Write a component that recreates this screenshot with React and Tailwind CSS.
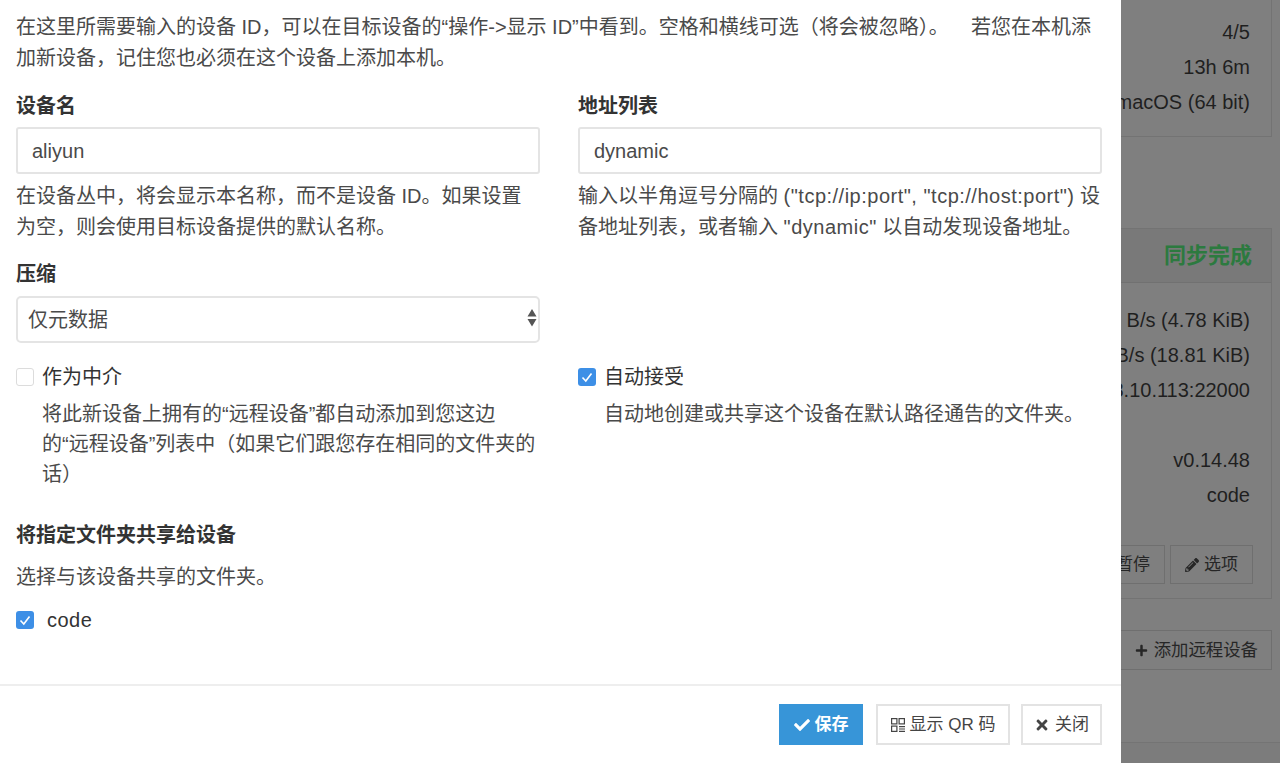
import React from "react";
import { FaCheck, FaTimes, FaPencilAlt, FaPlus } from "react-icons/fa";

const fontStack = "font-['Liberation_Sans','Noto_Sans_CJK_SC',sans-serif]";

const CheckBox = ({ checked }) =>
  checked ? (
    <span className="flex h-[18px] w-[18px] shrink-0 items-center justify-center rounded-[3px] bg-[#3d8fe6]">
      <svg viewBox="0 0 18 18" className="h-[18px] w-[18px]" fill="none" stroke="white" strokeWidth="1.6">
        <path d="M4.5 9.5 L7.8 13 L13.5 5.5" />
      </svg>
    </span>
  ) : (
    <span className="block h-[18px] w-[18px] shrink-0 rounded-[3px] border border-[#dcdcdc] bg-white" />
  );

const QrIcon = () => (
  <svg viewBox="0 0 14 14" className="h-[14px] w-[14px]" fill="none" stroke="#444" strokeWidth="1.2">
    <rect x="0.6" y="0.6" width="5.3" height="5.3" />
    <rect x="8.1" y="0.6" width="5.3" height="5.3" />
    <rect x="0.6" y="8.1" width="5.3" height="5.3" />
    <path d="M8 8.6 H14 M8 11 H14 M8 13.4 H14" />
  </svg>
);

const TextField = ({ label, value, help }) => (
  <div className="w-[524px]">
    <div className="h-[34px] text-[20px] font-bold leading-[34px] text-[#333]">{label}</div>
    <input
      readOnly
      value={value}
      className="mt-[4px] block h-[47px] w-full rounded-[3px] border-2 border-[#e4e4e4] px-[14px] pt-[2px] text-[20px] text-[#4a4a4a]"
    />
    <p className="mt-[7px] text-[20px] leading-[31px] text-[#4a4a4a]">{help}</p>
  </div>
);

const FooterButton = ({ className, children }) => (
  <button className={`flex h-[41px] items-center justify-center gap-[5px] border-2 text-[17px] ${className}`}>
    {children}
  </button>
);

const InfoRow = ({ children }) => (
  <div className="flex h-[35px] items-center justify-end whitespace-nowrap text-[20px] text-[#1f1f1f]">{children}</div>
);

const Modal = () => (
  <div className="flex h-[763px] w-[1121px] shrink-0 flex-col bg-white shadow-[1px_0_2px_#3f3f3f]">
    <div className="h-[684px] px-[16px] pt-[12px]">
      <p className="w-[1086px] text-[20px] leading-[31px] text-[#4a4a4a]">
        在这里所需要输入的设备 ID，可以在目标设备的“操作-&gt;显示 ID”中看到。空格和横线可选（将会被忽略）。&nbsp;&nbsp;&nbsp; 若您在本机添
        <br />
        加新设备，记住您也必须在这个设备上添加本机。
      </p>
      <div className="mt-[15px] flex gap-[38px]">
        <TextField
          label="设备名"
          value="aliyun"
          help="在设备丛中，将会显示本名称，而不是设备 ID。如果设置为空，则会使用目标设备提供的默认名称。"
        />
        <TextField
          label="地址列表"
          value="dynamic"
          help={
            <>
              输入以半角逗号分隔的 <span className="tracking-[0.5px]">("tcp://ip:port", "tcp://host:port")</span> 设备地址列表，或者输入{" "}
              <span className="tracking-[0.5px]">"dynamic"</span> 以自动发现设备地址。
            </>
          }
        />
      </div>
      <div className="mt-[14px] h-[34px] text-[20px] font-bold leading-[34px] text-[#333]">压缩</div>
      <div className="relative mt-[5px] w-[524px]">
        <select className="block h-[47px] w-full appearance-none rounded-[5px] border-2 border-[#e4e4e4] bg-white px-[10px] text-[20px] text-[#4a4a4a]">
          <option>仅元数据</option>
        </select>
        <svg viewBox="0 0 10 18" className="absolute right-[3px] top-[13px] h-[18px] w-[10px]" fill="#555">
          <path d="M5 0 L9.5 7.5 H0.5 Z M0.5 10 H9.5 L5 17.5 Z" />
        </svg>
      </div>
      <div className="mt-[19px] flex gap-[38px]">
        <div className="w-[524px]">
          <label className="flex h-[30px] items-center gap-[8px] text-[20px] text-[#333]">
            <CheckBox />
            作为中介
          </label>
          <p className="mt-[7px] pl-[26px] text-[20px] leading-[30px] text-[#4a4a4a]">
            将此新设备上拥有的“远程设备”都自动添加到您这边
            <br />
            的“远程设备”列表中（如果它们跟您存在相同的文件夹的话）
          </p>
        </div>
        <div className="w-[524px]">
          <label className="flex h-[30px] items-center gap-[8px] text-[20px] text-[#333]">
            <CheckBox checked />
            自动接受
          </label>
          <p className="mt-[7px] pl-[26px] text-[20px] leading-[30px] text-[#4a4a4a]">
            自动地创建或共享这个设备在默认路径通告的文件夹。
          </p>
        </div>
      </div>
      <div className="mt-[29px] h-[34px] text-[20px] font-bold leading-[34px] text-[#333]">将指定文件夹共享给设备</div>
      <p className="mt-[10px] h-[30px] text-[20px] leading-[30px] text-[#4a4a4a]">选择与该设备共享的文件夹。</p>
      <label className="mt-[13px] flex h-[30px] items-center gap-[13px] text-[20px] tracking-[0.5px] text-[#333]">
        <CheckBox checked />
        code
      </label>
    </div>
    <div className="flex flex-1 items-start justify-end border-t-2 border-[#eeeeee] pr-[19px] pt-[18px]">
      <FooterButton className="w-[84px] border-[#3795d8] bg-[#3795d8] font-bold text-white">
        <FaCheck className="text-[16px]" />
        保存
      </FooterButton>
      <FooterButton className="ml-[13px] w-[134px] border-[#e3e3e3] bg-white text-[#444]">
        <QrIcon />
        显示 QR 码
      </FooterButton>
      <FooterButton className="ml-[11px] w-[81px] border-[#e3e3e3] bg-white text-[#444]">
        <FaTimes className="text-[16px]" />
        关闭
      </FooterButton>
    </div>
  </div>
);

const Backdrop = () => (
  <div className="h-[763px] min-w-0 flex-1 overflow-hidden bg-[#7f7f7f]">
    <div className="-ml-[10px] mr-[8px] flex h-[137px] flex-col justify-end border-b border-r border-[#737373] pb-[17px] pr-[21px]">
      <InfoRow>4/5</InfoRow>
      <InfoRow>13h 6m</InfoRow>
      <InfoRow>macOS (64 bit)</InfoRow>
    </div>
    <div className="-ml-[10px] mr-[8px] mt-[91px] border-b border-r border-t border-[#737373]">
      <div className="flex h-[54px] items-center justify-end border-b border-[#717171] bg-[#797979] pr-[19px] text-[22px] font-bold text-[#2c7a3f]">
        同步完成
      </div>
      <div className="pr-[21px] pt-[19px]">
        <InfoRow>0 B/s (4.78 KiB)</InfoRow>
        <InfoRow>0 B/s (18.81 KiB)</InfoRow>
        <InfoRow>192.168.10.113:22000</InfoRow>
        <InfoRow />
        <InfoRow>v0.14.48</InfoRow>
        <InfoRow>code</InfoRow>
      </div>
      <div className="flex justify-end gap-[5px] pb-[14px] pr-[18px] pt-[33px]">
        <div className="flex h-[39px] w-[100px] items-center justify-end whitespace-nowrap border border-[#6f6f6f] pr-[14px] text-[17px] text-[#262626]">
          暂停
        </div>
        <div className="flex h-[39px] w-[83px] shrink-0 items-center justify-center gap-[5px] border border-[#6f6f6f] text-[17px] text-[#262626]">
          <FaPencilAlt className="text-[14px]" />
          选项
        </div>
      </div>
    </div>
    <div className="mr-[8px] mt-[31px] flex justify-end">
      <div className="flex h-[40px] w-[170px] shrink-0 items-center justify-end gap-[6px] whitespace-nowrap border border-[#6f6f6f] pr-[13px] text-[17.4px] text-[#262626]">
        <FaPlus className="text-[13px]" />
        添加远程设备
      </div>
    </div>
    <div className="mt-[72px] h-[30px] border-t border-[#747474] bg-[#7c7c7c]" />
  </div>
);

export default function App() {
  return (
    <div className={`flex h-[763px] w-[1280px] overflow-hidden ${fontStack}`}>
      <Modal />
      <Backdrop />
    </div>
  );
}
